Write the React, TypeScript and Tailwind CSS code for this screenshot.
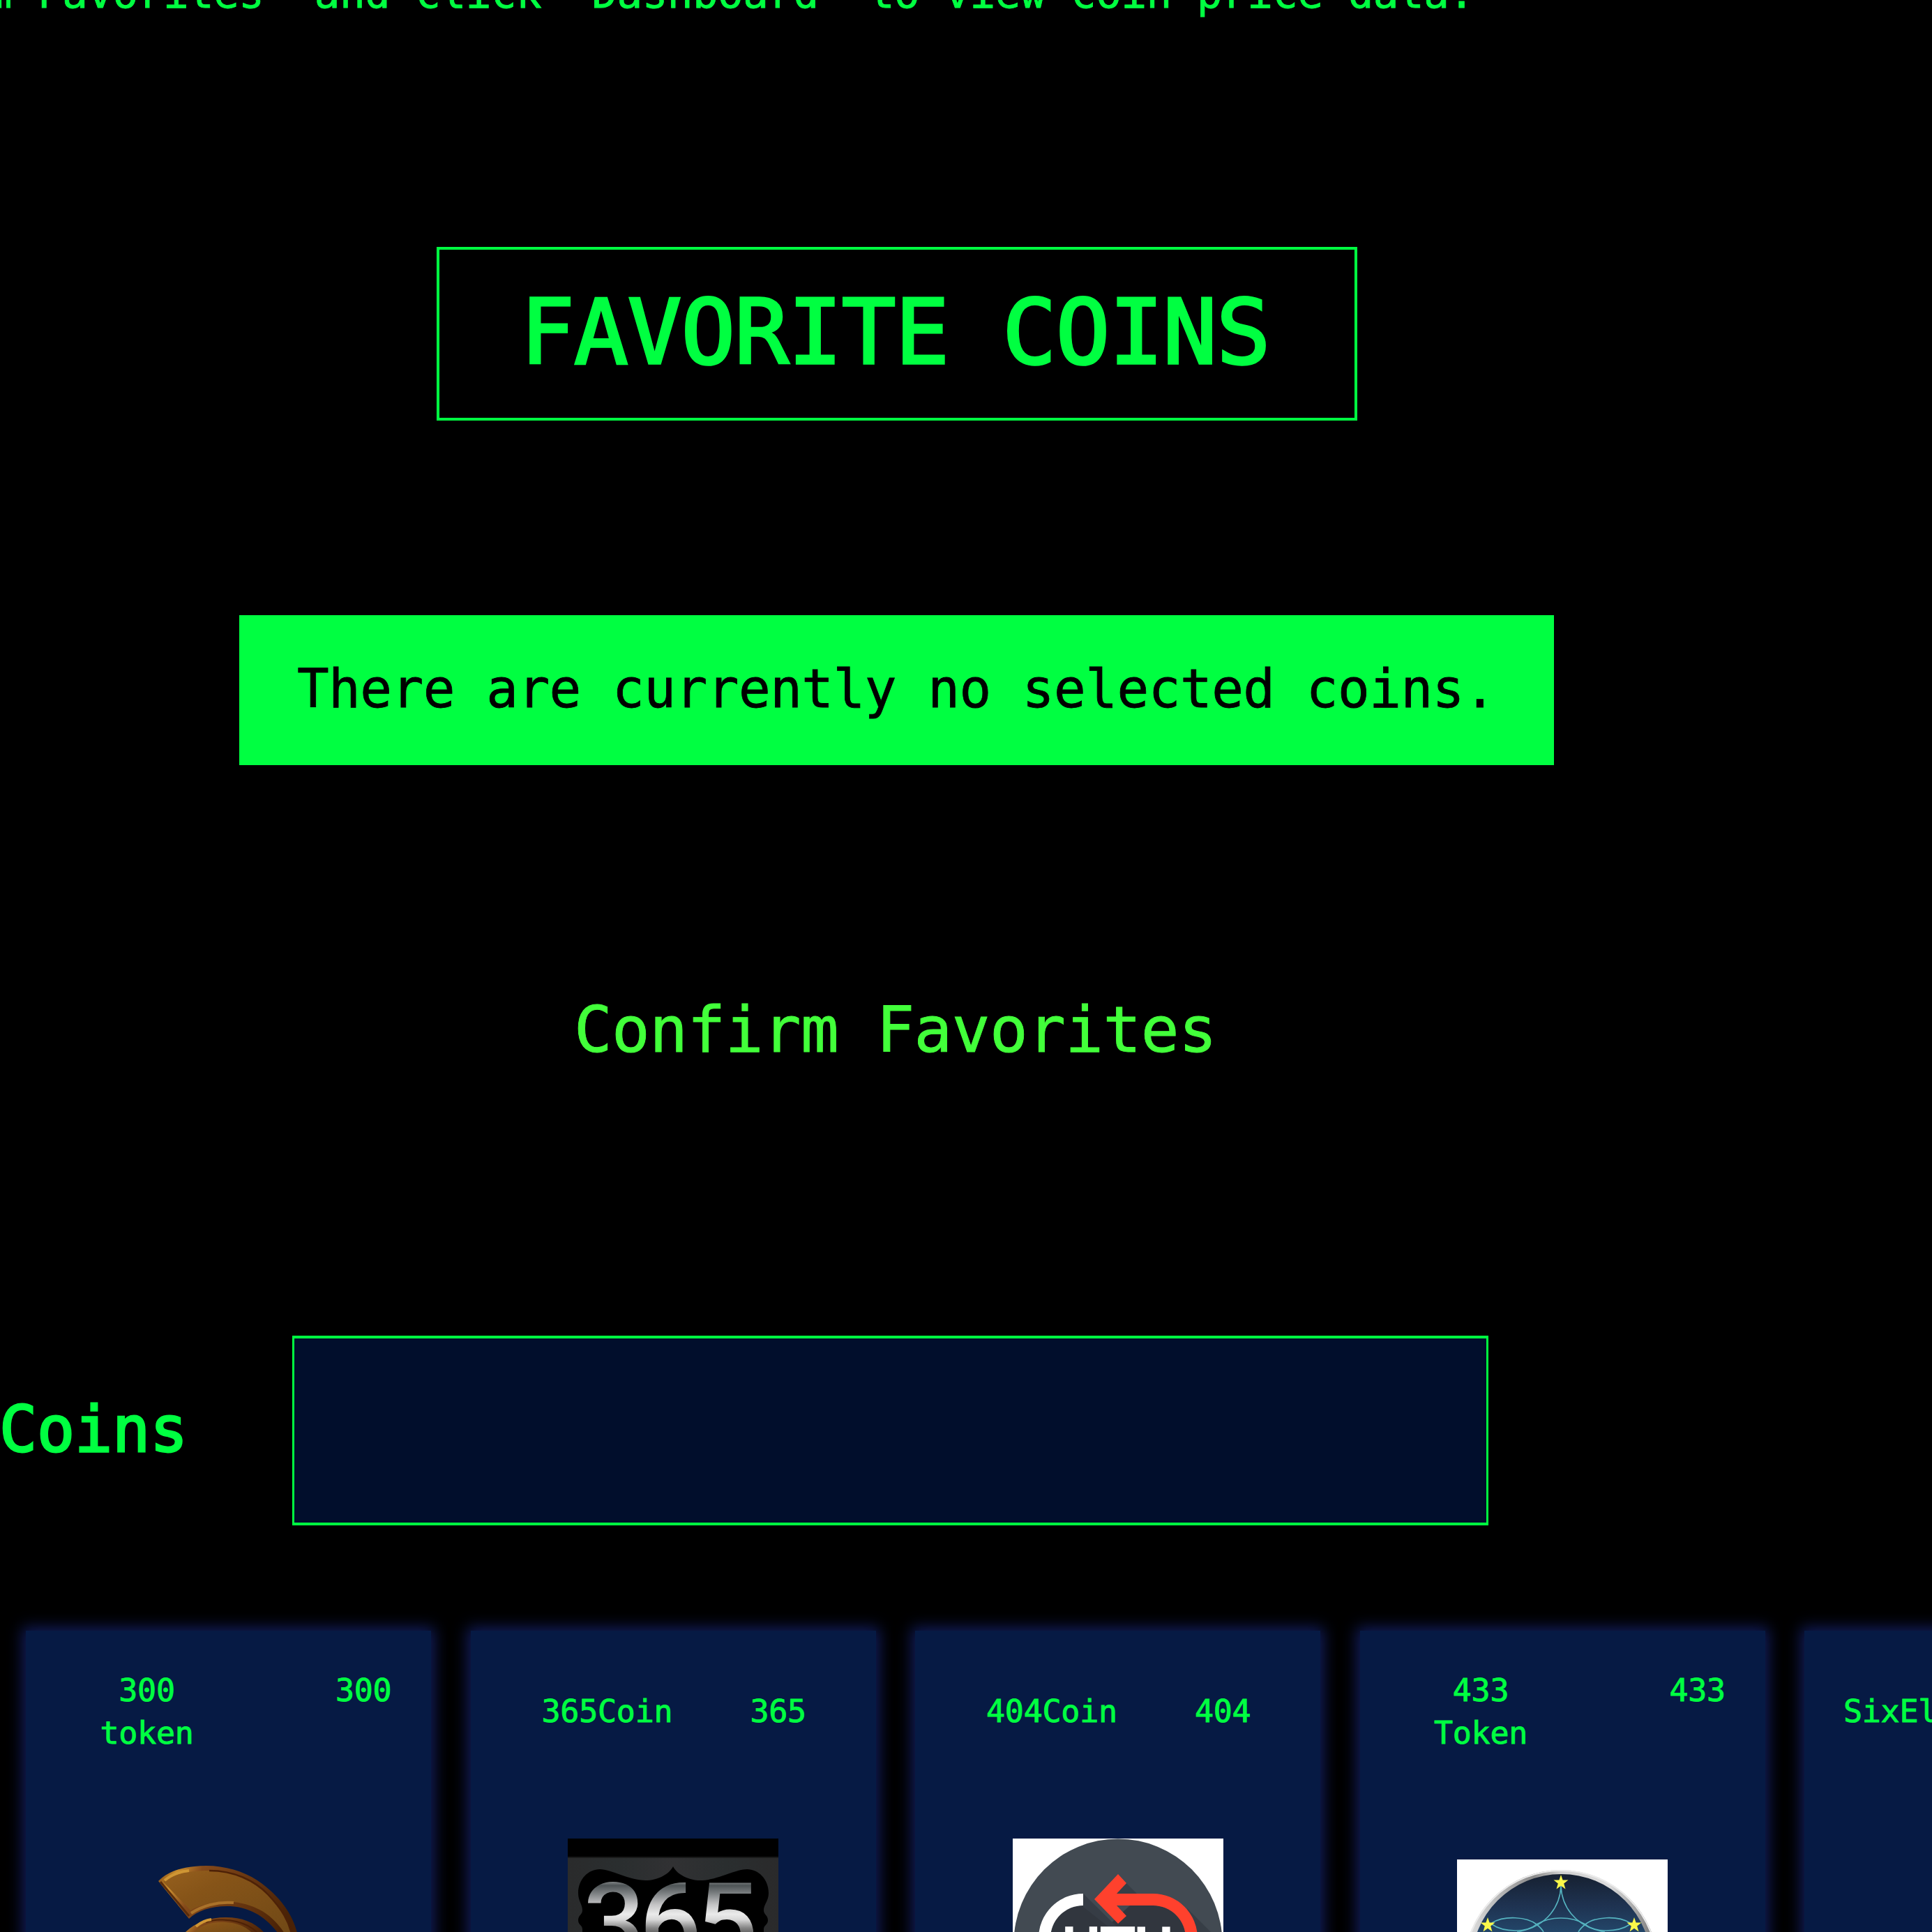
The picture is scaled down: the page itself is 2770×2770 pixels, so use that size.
import React from "react";

function SpartanLogo() {
  return (
    <svg width="302" height="302" viewBox="2 1 302 302" className="mx-auto block">
      <defs>
        <linearGradient id="bronze" x1="0" y1="0" x2="1" y2="1">
          <stop offset="0" stopColor="#96601e" />
          <stop offset="0.3" stopColor="#865418" />
          <stop offset="1" stopColor="#6f4816" />
        </linearGradient>
        <linearGradient id="rim" x1="0" y1="0" x2="1" y2="0.3">
          <stop offset="0" stopColor="#7a4210" />
          <stop offset="0.14" stopColor="#c98d2e" />
          <stop offset="0.3" stopColor="#84491a" />
          <stop offset="1" stopColor="#4a2206" />
        </linearGradient>
      </defs>
      <path
        d="M52 32C66 18 84 13 104 11C136 7 170 15 194 31C228 54 245 82 251 106L251 140L226 110C212 90 190 70 155 68C130 67 108 74 96 86Z"
        fill="url(#rim)"
      />
      <path
        d="M59 33C76 20 100 17 125 17C160 17 190 31 209 51C229 72 240 90 244 112L236 112C220 84 196 66 160 62C136 60 112 66 98 74Z"
        fill="url(#bronze)"
      />
      <path
        d="M125 17C160 17 190 31 209 51C229 72 240 90 244 112"
        fill="none"
        stroke="#4d2107"
        strokeWidth="2.5"
      />
      <path d="M55 33L96 82" fill="none" stroke="#5a2c0b" strokeWidth="3" />
      <path d="M61 31C72 22 84 18 96 17" fill="none" stroke="#cf9634" strokeWidth="4" />
      <path d="M99 78C114 68 136 61 160 63" fill="none" stroke="#a9722a" strokeWidth="4" />
      <path
        d="M90 106C104 92 124 84 149 84C172 84 190 91 204 106L214 130L80 130Z"
        fill="url(#rim)"
      />
      <path d="M100 108C114 94 130 90 149 91C166 92 180 98 190 110Z" fill="url(#bronze)" />
      <path d="M120 91C132 87 150 86 164 90C176 93 188 99 196 108" fill="none" stroke="#4d2107" strokeWidth="2" />
      <path d="M106 97C112 92 119 88 128 87" fill="none" stroke="#cf9634" strokeWidth="4" />
    </svg>
  );
}

function Coin365Logo() {
  return (
    <svg width="302" height="302" viewBox="0 0 302 302" className="mx-auto block">
      <defs>
        <linearGradient id="panel365" x1="0" y1="0" x2="1" y2="0">
          <stop offset="0" stopColor="#2a2b2c" />
          <stop offset="0.25" stopColor="#2a2e2f" />
          <stop offset="0.5" stopColor="#313133" />
          <stop offset="0.75" stopColor="#2a2e2f" />
          <stop offset="1" stopColor="#2a2a2b" />
        </linearGradient>
        <linearGradient id="chrome" gradientUnits="userSpaceOnUse" x1="0" y1="61" x2="0" y2="140">
          <stop offset="0" stopColor="#8a8d8e" />
          <stop offset="0.08" stopColor="#4e5456" />
          <stop offset="0.22" stopColor="#7b7f81" />
          <stop offset="0.42" stopColor="#c2c2c3" />
          <stop offset="0.6" stopColor="#ebebeb" />
          <stop offset="0.7" stopColor="#d8d8d8" />
          <stop offset="0.85" stopColor="#858585" />
          <stop offset="1" stopColor="#4a4a4a" />
        </linearGradient>
      </defs>
      <rect width="302" height="302" fill="#000000" />
      <rect y="26" width="302" height="276" fill="#191a1a" />
      <rect y="28" width="302" height="274" fill="url(#panel365)" />
      <path
        d="M151 40C145 52 128 60 112 60C88 60 62 44 46 44C30 44 15 58 15 78C15 90 21 94 21 103C21 109 15 110 15 117C15 124 21 124 21 130L21 302L281 302L281 130C281 124 287 124 287 117C287 110 281 109 281 103C281 94 288 90 288 78C288 58 273 44 257 44C240 44 214 60 190 60C174 60 157 52 151 40Z"
        fill="#000000"
      />
      <g
        fontFamily="Roboto, sans-serif"
        fontWeight="500"
        fontSize="156"
        fill="url(#chrome)"
      >
        <text x="22" y="173.5">3</text>
        <text x="103" y="173.5">6</text>
        <text x="184" y="173.5">5</text>
      </g>
    </svg>
  );
}

function Coin404Logo() {
  return (
    <svg width="302" height="302" viewBox="0 0 302 302" className="mx-auto block">
      <rect width="302" height="302" fill="#ffffff" />
      <circle cx="151" cy="150" r="149.5" fill="#424a52" />
      <path d="M101 79L151 135L101 150Z" fill="#343a42" />
      <path d="M163 64L178 79L145 79Z" fill="#373e46" />
      <path d="M250 100L296 146L260 150Z" fill="#373e46" />
      <path d="M54 143A47 47 0 0 1 101 96L140 122L168 96L201 96A47 47 0 0 1 248 143L248 200L54 200Z" fill="#31363e" />
      <path d="M101 79L151 128L144 132L101 98Z" fill="#363c45" />
      <path d="M37 143A64 64 0 0 1 101 79L101 96A47 47 0 0 0 54 143L54 180L37 180Z" fill="#ffffff" />
      <path
        d="M117 87L151 51L163 64L149 79L201 79A64 64 0 0 1 265 143L265 180L248 180L248 143A47 47 0 0 0 201 96L149 96L163 111L151 122Z"
        fill="#ff412d"
      />
      <g
        fontFamily="'Liberation Sans', Arial, sans-serif"
        fontWeight="700"
        fontSize="78"
        fill="#ffffff"
      >
        <text x="70" y="180">H</text>
        <text x="125" y="180" textLength="51" lengthAdjust="spacingAndGlyphs">T</text>
        <text x="174" y="180">U</text>
      </g>
    </svg>
  );
}

const STAR = "M0 -11L2.6 -3.4L10.5 -3.4L4.2 1.4L6.5 9.5L0 4.8L-6.5 9.5L-4.2 1.4L-10.5 -3.4L-2.6 -3.4Z";

function Token433Logo() {
  return (
    <svg width="302" height="302" viewBox="0 0 302 302" className="mx-auto block">
      <defs>
        <linearGradient id="night" gradientUnits="userSpaceOnUse" x1="0" y1="20" x2="0" y2="110">
          <stop offset="0" stopColor="#162030" />
          <stop offset="0.5" stopColor="#1e3250" />
          <stop offset="1" stopColor="#24496d" />
        </linearGradient>
        <linearGradient id="steel" gradientUnits="userSpaceOnUse" x1="10" y1="0" x2="288" y2="0">
          <stop offset="0" stopColor="#e4e4e4" />
          <stop offset="0.18" stopColor="#b8b8b8" />
          <stop offset="0.36" stopColor="#8a8a8a" />
          <stop offset="0.5" stopColor="#d0d0d0" />
          <stop offset="0.75" stopColor="#dcdcdc" />
          <stop offset="0.9" stopColor="#a0a0a0" />
          <stop offset="1" stopColor="#6c6c6c" />
        </linearGradient>
      </defs>
      <rect width="302" height="302" fill="#ffffff" />
      <circle cx="149" cy="154" r="139" fill="url(#steel)" />
      <circle cx="149" cy="154" r="138" fill="none" stroke="#ececec" strokeWidth="2" />
      <circle cx="149.5" cy="150" r="129" fill="url(#night)" />
      <g fill="none" stroke="#56b4c0" strokeWidth="1.6">
        <path d="M149 38C148 64 132 96 86 104" />
        <path d="M149 38C150 64 166 96 212 104" />
        <path d="M50 91C68 80 100 82 114 93C119 97 122 100 124 104" />
        <path d="M248 91C230 80 198 82 184 93C179 97 176 100 174 104" />
        <path d="M114 93C134 81 164 81 184 93" />
        <path d="M50 93C60 100 72 102 84 102C98 102 108 98 114 93" />
        <path d="M248 93C238 100 226 102 214 102C200 102 190 98 184 93" />
      </g>
      <g fill="#faf84a">
        <path d={STAR} transform="translate(149 33)" />
        <path d={STAR} transform="translate(44 94)" />
        <path d={STAR} transform="translate(254 94)" />
      </g>
    </svg>
  );
}

type Coin = {
  name: string;
  symbol: string;
  wrap: boolean;
  logo?: React.ReactNode;
};

const COINS: Coin[] = [
  { name: "300 token", symbol: "300", wrap: true, logo: <SpartanLogo /> },
  { name: "365Coin", symbol: "365", wrap: false, logo: <Coin365Logo /> },
  { name: "404Coin", symbol: "404", wrap: false, logo: <Coin404Logo /> },
  { name: "433 Token", symbol: "433", wrap: true, logo: <Token433Logo /> },
  { name: "SixEleven", symbol: "611", wrap: false },
];

function CoinCard({ coin }: { coin: Coin }) {
  return (
    <div
      className={
        coin.wrap
          ? "h-[700px] w-[581px] shrink-0 bg-[#061a44] pt-[55px] shadow-[0_0_20px_5px_#121d5b]"
          : "h-[700px] w-[581px] shrink-0 bg-[#061a44] pt-[85px] shadow-[0_0_20px_5px_#121d5b]"
      }
    >
      <div
        className={
          coin.wrap
            ? "flex items-start gap-[203px] pl-[106px] text-center text-[45px] leading-[61px] tracking-[-0.3px] [-webkit-text-stroke:0.9px_#00ff41]"
            : coin.logo
              ? "flex items-start gap-[111px] pl-[102px] text-center text-[45px] leading-[61px] tracking-[-0.25px] [-webkit-text-stroke:0.9px_#00ff41]"
              : "flex items-start gap-[90px] pl-[56px] text-center text-[45px] leading-[61px] tracking-[-0.3px] [-webkit-text-stroke:0.9px_#00ff41]"
        }
      >
        <div className={coin.wrap ? "w-[135px]" : ""}>{coin.name}</div>
        <div>{coin.symbol}</div>
      </div>
      <div className={coin.wrap ? "mt-[151px]" : "mt-[152px]"}>{coin.logo}</div>
    </div>
  );
}

export default function App() {
  return (
    <div className="flex h-[2770px] w-[2770px] flex-col overflow-hidden bg-black font-['DejaVu_Sans_Mono',monospace] text-[#00ff41]">
      <p className="-mt-[40px] -ml-[236px] h-[60px] whitespace-pre text-[61px] leading-[60px] tracking-[-0.58px] [-webkit-text-stroke:0.8px_#00ff41]">
        {'Confirm Favorites" and click "Dashboard" to view coin price data.'}
      </p>

      <div className="mt-[334px] flex w-[2571px] flex-col items-center">
        <h1 className="flex h-[249px] w-[1320px] items-center justify-center border-4 border-[#00ff41] pr-[4px] pb-[5px] text-[129px] leading-none tracking-[-0.9px] [-webkit-text-stroke:3.5px_#00ff41]">
          FAVORITE COINS
        </h1>
        <div className="mt-[279px] flex h-[215px] w-[1885px] items-center justify-center bg-[#00ff41] pr-[1px] pb-[3px] text-[76px] leading-none tracking-[-0.54px] text-black [-webkit-text-stroke:0.8px_#000000]">
          There are currently no selected coins.
        </div>
        <button className="mt-[320px] mr-[4px] h-[120px] text-[91px] leading-[120px] tracking-[-0.6px] text-[#42ff3a] [-webkit-text-stroke:0.9px_#42ff3a]">
          Confirm Favorites
        </button>
      </div>

      <div className="mt-[378px] flex h-[272px] shrink-0 items-center">
        <h2 className="-ml-[1px] w-[420px] pb-[2px] text-[90px] leading-none tracking-[-0.2px] [-webkit-text-stroke:2.8px_#00ff41]">
          Coins
        </h2>
        <input
          aria-label="Search coins"
          className="h-[272px] w-[1715px] border-x-[3px] border-y-4 border-[#00ff41] bg-[#010e2c] px-8 text-[92px] outline-none"
        />
      </div>

      <div className="mt-[151px] ml-[37px] flex gap-[56.5px]">
        {COINS.map((coin) => (
          <CoinCard key={coin.name} coin={coin} />
        ))}
      </div>
    </div>
  );
}
